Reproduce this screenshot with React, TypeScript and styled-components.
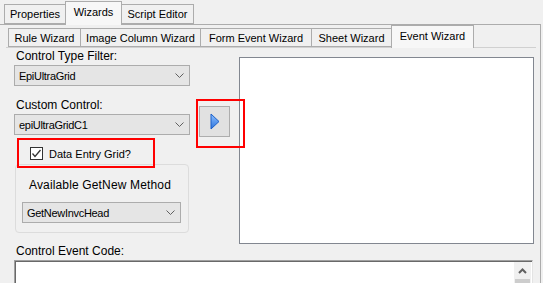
import * as React from "react";
import styled, { createGlobalStyle } from "styled-components";

const GlobalStyle = createGlobalStyle`
  html, body {
    margin: 0;
    padding: 0;
    background: #f0f0f0;
    overflow: hidden;
  }
  body {
    font-family: "Liberation Sans", Arial, sans-serif;
    font-size: 11px;
    color: #000;
  }
`;

const outerTabs = [
  { label: "Properties", width: 62 },
  { label: "Wizards", width: 57, active: true },
  { label: "Script Editor", width: 73 },
];

const innerTabs = [
  { label: "Rule Wizard", width: 73 },
  { label: "Image Column Wizard", width: 121 },
  { label: "Form Event Wizard", width: 112 },
  { label: "Sheet Wizard", width: 81 },
  { label: "Event Wizard", width: 83, active: true },
];

const Chevron = () => (
  <svg width="9" height="5" viewBox="0 0 9 5">
    <polyline points="0.5,0.5 4.5,4.5 8.5,0.5" fill="none" stroke="#606060" strokeWidth="1" />
  </svg>
);

const ComboBox: React.FC<{ value: string; width: number }> = ({ value, width }) => (
  <Combo style={{ width }}>
    <span>{value}</span>
    <Chevron />
  </Combo>
);

const App: React.FC = () => (
  <>
    <GlobalStyle />
    <Window>
      <TabStrip $inset={4} $height={24}>
        {outerTabs.map(({ label, width, active }) => (
          <Tab key={label} $width={width} $active={active} $tall={20}>
            {label}
          </Tab>
        ))}
      </TabStrip>
      <OuterPanel>
        <TabStrip $inset={8} $height={22}>
          {innerTabs.map(({ label, width, active }) => (
            <Tab key={label} $width={width} $active={active} $tall={19}>
              {label}
            </Tab>
          ))}
        </TabStrip>
        <InnerPanel>
          <TopRow>
            <LeftColumn>
              <FieldLabel>Control Type Filter:</FieldLabel>
              <ComboBox value="EpiUltraGrid" width={176} />
              <FieldLabel $gap={12}>Custom Control:</FieldLabel>
              <ComboBox value="epiUltraGridC1" width={176} />
              <CheckRow>
                <CheckBox>
                  <svg width="11" height="11" viewBox="0 0 11 11">
                    <polyline
                      points="1.5,5.5 4,8.5 9.5,2"
                      fill="none"
                      stroke="#333"
                      strokeWidth="1.3"
                    />
                  </svg>
                </CheckBox>
                <span>Data Entry Grid?</span>
                <Highlight style={{ left: -13, top: -9, width: 138, height: 30 }} />
              </CheckRow>
              <GroupBox>
                <GroupTitle>Available GetNew Method</GroupTitle>
                <ComboBox value="GetNewInvcHead" width={159} />
              </GroupBox>
              <FieldLabel $gap={11}>Control Event Code:</FieldLabel>
            </LeftColumn>
            <ArrowButton>
              <svg width="10" height="17" viewBox="0 0 10 17">
                <defs>
                  <linearGradient id="arrowFill" x1="0" y1="0" x2="0" y2="1">
                    <stop offset="0" stopColor="#8ec0ff" />
                    <stop offset="1" stopColor="#2d74dc" />
                  </linearGradient>
                </defs>
                <polygon
                  points="1,1 9,8.5 1,16"
                  fill="url(#arrowFill)"
                  stroke="#1b5fc9"
                  strokeWidth="1"
                  strokeLinejoin="round"
                />
              </svg>
              <Highlight style={{ left: -4, top: -8, width: 49, height: 49 }} />
            </ArrowButton>
            <ListBox />
          </TopRow>
          <CodeBox>
            <ScrollBar>
              <ScrollArrow>
                <svg width="9" height="6" viewBox="0 0 9 6">
                  <polyline points="1,5 4.5,1.5 8,5" fill="none" stroke="#606060" strokeWidth="2" />
                </svg>
              </ScrollArrow>
              <Thumb />
            </ScrollBar>
          </CodeBox>
        </InnerPanel>
      </OuterPanel>
    </Window>
  </>
);

export default App;

const Window = styled.div`
  width: 543px;
  height: 283px;
  overflow: hidden;
  display: flex;
  flex-direction: column;
  background: #f0f0f0;
`;

const TabStrip = styled.div<{ $inset: number; $height: number }>`
  display: flex;
  align-items: flex-end;
  height: ${({ $height }) => $height}px;
  padding-left: ${({ $inset }) => $inset}px;
  position: relative;
  z-index: 2;
  flex-shrink: 0;
`;

const Tab = styled.div<{ $width: number; $active?: boolean; $tall: number }>`
  box-sizing: border-box;
  width: ${({ $width }) => $width}px;
  height: ${({ $active, $tall }) => ($active ? $tall + 4 : $tall)}px;
  margin-bottom: ${({ $active }) => ($active ? -1 : 0)}px;
  padding-bottom: ${({ $active }) => ($active ? 3 : 0)}px;
  display: flex;
  align-items: center;
  justify-content: center;
  white-space: nowrap;
  border: 1px solid #acacac;
  border-bottom: ${({ $active }) => ($active ? "none" : "1px solid #acacac")};
  background: ${({ $active }) => ($active ? "#f7f7f7" : "#f0f0f0")};
  & + & {
    margin-left: -1px;
  }
`;

const OuterPanel = styled.div`
  flex: 1;
  display: flex;
  flex-direction: column;
  width: 541px;
  box-sizing: border-box;
  border-top: 1px solid #acacac;
  border-right: 1px solid #acacac;
`;

const InnerPanel = styled.div`
  flex: 1;
  box-sizing: border-box;
  margin-left: 6px;
  margin-right: 4px;
  border-top: 1px solid #d0d0d0;
  padding: 1px 0 0 8px;
`;

const TopRow = styled.div`
  display: flex;
  align-items: flex-start;
`;

const LeftColumn = styled.div`
  width: 176px;
  display: flex;
  flex-direction: column;
`;

const FieldLabel = styled.div<{ $gap?: number }>`
  font-size: 12px;
  line-height: 14px;
  padding-left: 2px;
  margin-top: ${({ $gap }) => $gap ?? 0}px;
  margin-bottom: 1px;
  white-space: nowrap;
`;

const Combo = styled.div`
  box-sizing: border-box;
  height: 21px;
  margin-top: 1px;
  display: flex;
  align-items: center;
  justify-content: space-between;
  padding: 0 5px 0 4px;
  background: #e5e5e5;
  border: 1px solid #acacac;
  letter-spacing: -0.3px;
`;

const CheckRow = styled.div`
  position: relative;
  display: flex;
  align-items: center;
  height: 13px;
  margin: 12px 0 0 16px;
  gap: 6px;
  white-space: nowrap;
  font-size: 11px;
`;

const CheckBox = styled.span`
  box-sizing: border-box;
  flex: none;
  width: 13px;
  height: 13px;
  border: 1px solid #333333;
  background: #ffffff;
  display: inline-flex;
  align-items: center;
  justify-content: center;
`;

const Highlight = styled.div`
  position: absolute;
  box-sizing: border-box;
  border: 2px solid #ff0000;
  z-index: 3;
  pointer-events: none;
`;

const GroupBox = styled.div`
  box-sizing: border-box;
  width: 174px;
  margin: 4px 0 0 1px;
  border: 1px solid #dcdcdc;
  border-radius: 4px;
  padding: 13px 0 9px 6px;
`;

const GroupTitle = styled.div`
  font-size: 12px;
  line-height: 14px;
  padding-left: 7px;
  margin-bottom: 10px;
  letter-spacing: 0.15px;
  white-space: nowrap;
`;

const ArrowButton = styled.div`
  position: relative;
  box-sizing: border-box;
  width: 31px;
  height: 31px;
  margin: 57px 0 0 9px;
  background: #e1e1e1;
  border: 1px solid #adadad;
  display: flex;
  align-items: center;
  justify-content: center;
  padding-left: 1px;
`;

const ListBox = styled.div`
  box-sizing: border-box;
  width: 295px;
  height: 187px;
  margin: 8px 0 0 9px;
  background: #fff;
  border: 1px solid #828790;
`;

const CodeBox = styled.div`
  box-sizing: border-box;
  width: 519px;
  height: 60px;
  margin-top: 1px;
  background: #fff;
  border: 1px solid #a0a0a0;
  border-right-color: #e3e3e3;
  box-shadow: inset 1px 1px 0 #696969;
  display: flex;
  justify-content: flex-end;
  padding: 1px 1px 0 0;
`;

const ScrollBar = styled.div`
  width: 17px;
  background: #f0f0f0;
  display: flex;
  flex-direction: column;
  align-items: center;
`;

const ScrollArrow = styled.div`
  height: 17px;
  width: 100%;
  display: flex;
  align-items: center;
  justify-content: center;
`;

const Thumb = styled.div`
  width: 15px;
  flex: 1;
  background: #cdcdcd;
`;
